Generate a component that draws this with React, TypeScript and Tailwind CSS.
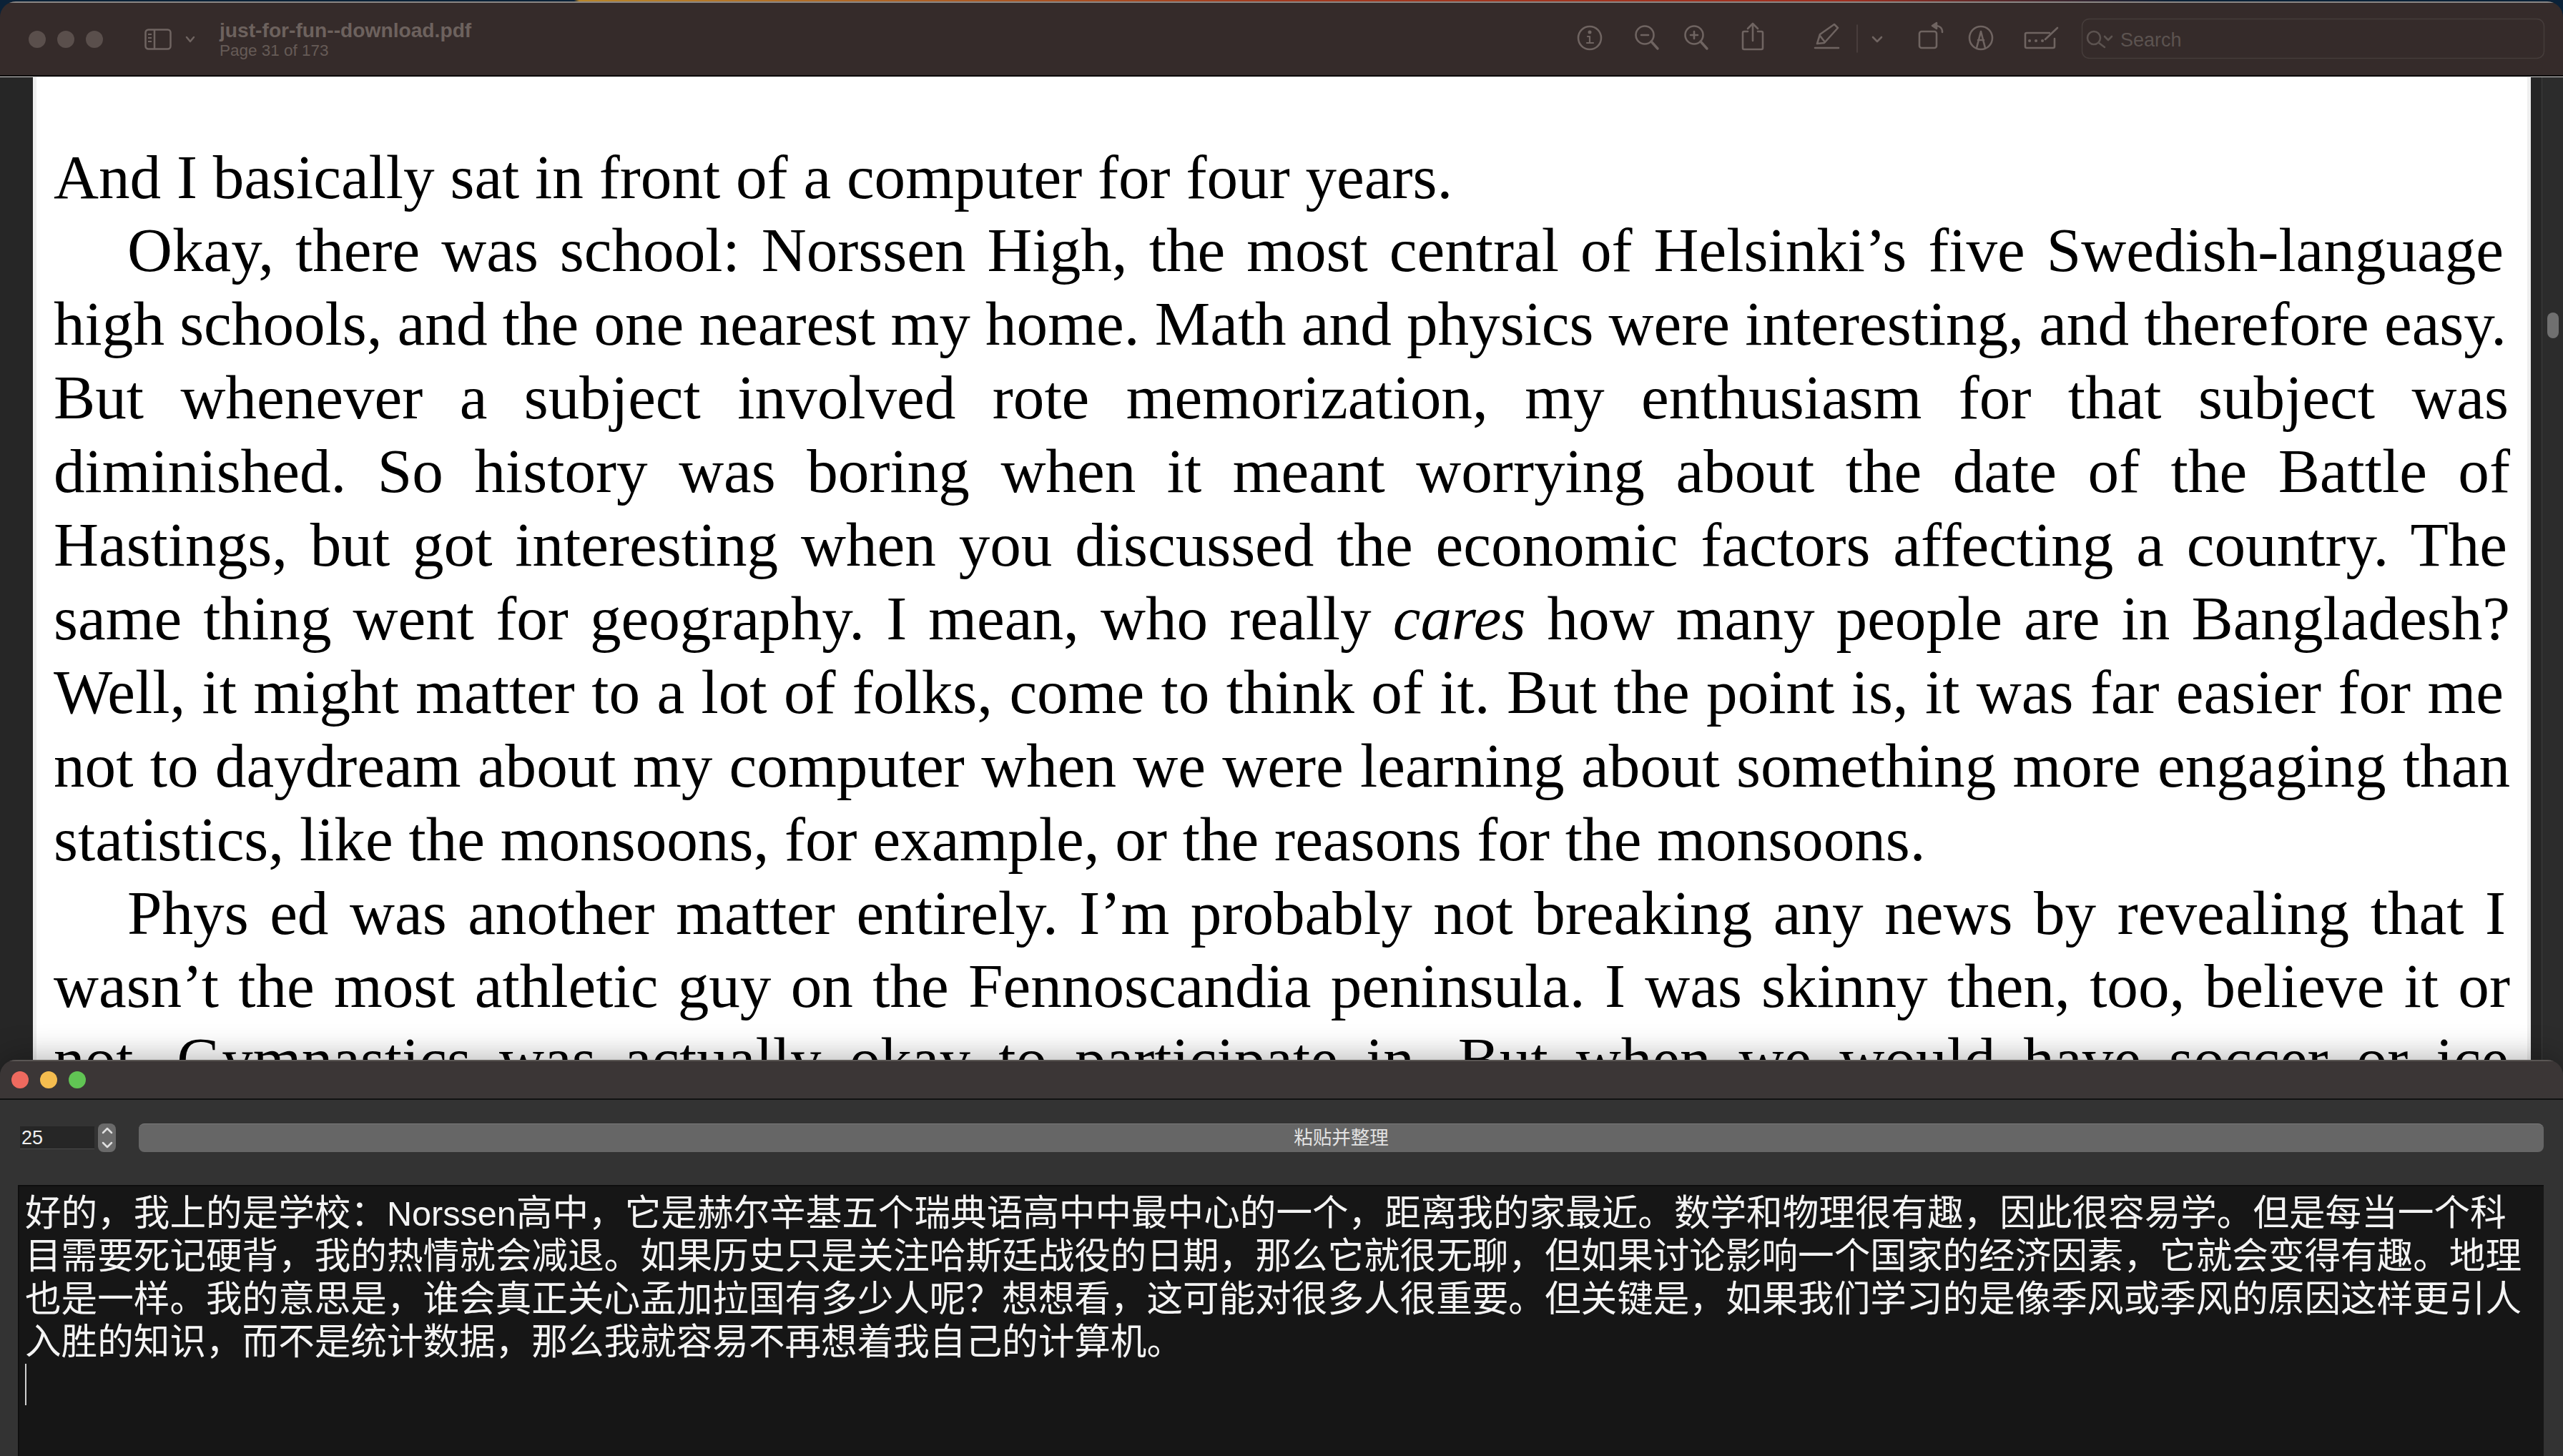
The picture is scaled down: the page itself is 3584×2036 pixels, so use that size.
const pdfParagraphs = [
  {
    indent: false,
    lines: [{ parts: ["And I basically sat in front of a computer for four years."], justify: false, inset: "" }],
  },
  {
    indent: true,
    lines: [
      { parts: ["Okay, there was school: Norssen High, the most central of Helsinki’s five Swedish-language"], justify: true, inset: "pr-[9px]" },
      { parts: ["high schools, and the one nearest my home. Math and physics were interesting, and therefore easy."], justify: true, inset: "pr-[5px] [word-spacing:-1px]" },
      { parts: ["But whenever a subject involved rote memorization, my enthusiasm for that subject was"], justify: true, inset: "pr-[2px]" },
      { parts: ["diminished. So history was boring when it meant worrying about the date of the Battle of"], justify: true, inset: "" },
      { parts: ["Hastings, but got interesting when you discussed the economic factors affecting a country. The"], justify: true, inset: "pr-[4px]" },
      { parts: ["same thing went for geography. I mean, who really ", "cares", " how many people are in Bangladesh?"], justify: true, inset: "" },
      { parts: ["Well, it might matter to a lot of folks, come to think of it. But the point is, it was far easier for me"], justify: true, inset: "pr-[9px]" },
      { parts: ["not to daydream about my computer when we were learning about something more engaging than"], justify: true, inset: "" },
      { parts: ["statistics, like the monsoons, for example, or the reasons for the monsoons."], justify: false, inset: "" },
    ],
  },
  {
    indent: true,
    lines: [
      { parts: ["Phys ed was another matter entirely. I’m probably not breaking any news by revealing that I"], justify: true, inset: "pr-[6px]" },
      { parts: ["wasn’t the most athletic guy on the Fennoscandia peninsula. I was skinny then, too, believe it or"], justify: true, inset: "" },
      { parts: ["not. Gymnastics was actually okay to participate in. But when we would have soccer or ice"], justify: true, inset: "pr-[2px]" },
    ],
  },
];

const translated = [
  "目需要死记硬背，我的热情就会减退。如果历史只是关注哈斯廷战役的日期，那么它就很无聊，但如果讨论影响一个国家的经济因素，它就会变得有趣。地理",
  "也是一样。我的意思是，谁会真正关心孟加拉国有多少人呢？想想看，这可能对很多人很重要。但关键是，如果我们学习的是像季风或季风的原因这样更引人",
  "入胜的知识，而不是统计数据，那么我就容易不再想着我自己的计算机。",
];

function Toolbar() {
  return (
    <svg width="1394" height="70" viewBox="2190 20 1394 70" className="shrink-0" fill="none" stroke="#6f6461" strokeWidth="2.6" strokeLinecap="round" strokeLinejoin="round">
      {/* info */}
      <circle cx="2223" cy="53" r="16" />
      <path d="M2220 51h3v8M2219 60h9" strokeWidth="2.2" />
      <circle cx="2223" cy="45" r="1.2" fill="#6f6461" />
      {/* zoom out */}
      <circle cx="2300" cy="49" r="12.5" />
      <path d="M2295 49h10" />
      <path d="M2309 58l9 10" strokeWidth="3.4" />
      {/* zoom in */}
      <circle cx="2369" cy="49" r="12.5" />
      <path d="M2364 49h10M2369 44v10" />
      <path d="M2378 58l9 10" strokeWidth="3.4" />
      {/* share */}
      <path d="M2444 44h-5a2 2 0 0 0-2 2v21a2 2 0 0 0 2 2h24a2 2 0 0 0 2-2v-21a2 2 0 0 0-2-2h-5M2451 57v-23M2444 40l7-7 7 7" />
      {/* highlight pen */}
      <path d="M2538 67h33M2541 61l4-13 20-14 5 5-19 21zM2545 50l7 9" />
      <path d="M2597 35v38" strokeOpacity="0.45" strokeWidth="1.5" />
      <path d="M2619 52l6 6 6-6" />
      {/* rotate */}
      <rect x="2684" y="44" width="24" height="23" rx="3" />
      <path d="M2716 45c0-6-4-9-9-9" />
      <path d="M2708 32l-6 4 6 4z" fill="#6f6461" />
      {/* markup */}
      <circle cx="2770" cy="53" r="16" />
      <path d="M2764 67l6-23 6 23M2766 56h8" />
      {/* sign */}
      <path d="M2866 46h-32a2 2 0 0 0-2 2v17a2 2 0 0 0 2 2h37a2 2 0 0 0 2-2v-11" />
      <path d="M2860 55l17-16" />
      <path d="M2838 57h.1M2847 57h.1M2856 57h.1" strokeWidth="4" />
      {/* search */}
      <rect x="2911.5" y="26.5" width="646" height="55" rx="10" stroke="#463d3b" strokeWidth="1.5" />
      <g stroke="#5c5350">
        <circle cx="2928" cy="53" r="9" />
        <path d="M2935 60l8 6M2943 51l5 5 5-5" />
      </g>
      <text x="2965" y="65" fill="#5c5350" stroke="none" fontSize="27" fontFamily="Liberation Sans, sans-serif">Search</text>
    </svg>
  );
}

function TitleBar() {
  return (
    <div className="flex h-[105px] shrink-0 items-center border-b-2 border-[#0c0a0a] bg-[#352b2a] pt-[3px] font-['Liberation_Sans',sans-serif] shadow-[inset_0_2px_0_#8a8684]">
      <div className="ml-[40px] flex gap-[16px]">
        <span className="h-[24px] w-[24px] rounded-full bg-[#5a4f4c]" />
        <span className="h-[24px] w-[24px] rounded-full bg-[#5a4f4c]" />
        <span className="h-[24px] w-[24px] rounded-full bg-[#5a4f4c]" />
      </div>
      <svg width="38" height="30" viewBox="0 0 38 30" className="ml-[58px]" fill="none" stroke="#6f6461" strokeWidth="2.5">
        <rect x="1.5" y="1.5" width="35" height="27" rx="4" />
        <path d="M14 2v26" />
        <path d="M5 8h5M5 13h5M5 18h5" strokeWidth="2" />
      </svg>
      <svg width="14" height="10" viewBox="0 0 14 10" className="ml-[19px]" fill="none" stroke="#6f6461" strokeWidth="2.5" strokeLinecap="round" strokeLinejoin="round">
        <path d="M2 2l5 6 5-6" />
      </svg>
      <div className="ml-[34px] flex w-[400px] flex-col">
        <div className="text-[28.2px] leading-[31px] font-bold text-[#6d625e]">just-for-fun--download.pdf</div>
        <div className="text-[22.5px] leading-[26px] text-[#665b57]">Page 31 of 173</div>
      </div>
      <div className="flex-1" />
      <Toolbar />
    </div>
  );
}

function PdfPage() {
  return (
    <div className="min-w-0 flex-1 border-x-[5px] border-[#efefef] bg-white px-[24px] pt-[88.5px] font-['Liberation_Serif',serif] text-[87.2px] leading-[102.9px] text-black">
      {pdfParagraphs.map((para, i) => (
        <div key={i}>
          {para.lines.map((line, j) => (
            <div
              key={j}
              className={`whitespace-nowrap ${line.inset} ${para.indent && j === 0 ? "pl-[103px]" : ""} ${line.justify ? "text-justify [text-align-last:justify]" : ""}`}
            >
              {line.parts.length === 3 ? (
                <>
                  {line.parts[0]}
                  <em>{line.parts[1]}</em>
                  {line.parts[2]}
                </>
              ) : (
                line.parts[0]
              )}
            </div>
          ))}
        </div>
      ))}
    </div>
  );
}

function PreviewWindow() {
  return (
    <div className="mt-[2px] flex h-[1500px] shrink-0 flex-col overflow-hidden rounded-t-[22px]">
      <TitleBar />
      <div className="flex min-h-0 flex-1 overflow-hidden border-t border-[#cfcfcf]">
        <div className="w-[46px] shrink-0 bg-[#262626]" />
        <PdfPage />
        <div className="flex w-[45px] shrink-0 bg-[#262626]">
          <div className="ml-[15px] flex-1 border-l border-[#3d3d3d] bg-[#2c2c2c] pt-[329px] pl-[7px]">
            <div className="h-[36px] w-[16px] rounded-full bg-[#707070]" />
          </div>
        </div>
      </div>
    </div>
  );
}

function ToolWindow() {
  return (
    <div className="relative -mt-[20px] flex flex-1 flex-col overflow-hidden rounded-t-[22px] bg-[#333333] font-['Liberation_Sans','Noto_Sans_CJK_SC',sans-serif] shadow-[0_-4px_44px_rgba(0,0,0,0.3)]">
      <div className="flex h-[56px] shrink-0 items-center gap-[16px] border-b-2 border-[#121212] bg-[#3b3636] pt-[2px] pl-[16px] shadow-[inset_0_2px_0_#5a5654]">
        <span className="h-[24px] w-[24px] rounded-full bg-[#ee6a5f]" />
        <span className="h-[24px] w-[24px] rounded-full bg-[#f5bd4f]" />
        <span className="h-[24px] w-[24px] rounded-full bg-[#61c454]" />
      </div>
      <div className="flex h-[119px] shrink-0 items-start pt-[33px] pr-[27px] pl-[28px]">
        <div className="mt-[4px] flex h-[32px] w-[104px] items-center border-b border-[#4a4a4a] bg-[#262626] pt-[2px] pl-[2px] text-[27px] leading-none text-[#eeeeee]">25</div>
        <div className="ml-[5px] flex h-[40px] w-[25px] flex-col items-center justify-around rounded-[8px] bg-[#6a6a6a]">
          <svg width="16" height="10" viewBox="0 0 16 10" fill="none" stroke="#e0e0e0" strokeWidth="2.5" strokeLinecap="round" strokeLinejoin="round">
            <path d="M2 8l6-6 6 6" />
          </svg>
          <svg width="16" height="10" viewBox="0 0 16 10" fill="none" stroke="#e0e0e0" strokeWidth="2.5" strokeLinecap="round" strokeLinejoin="round">
            <path d="M2 2l6 6 6-6" />
          </svg>
        </div>
        <div className="ml-[32px] flex h-[40px] flex-1 items-center justify-center rounded-[8px] border-t border-[#7a7a7a] bg-[#666666] text-[26.5px] text-[#e2e2e2]">粘贴并整理</div>
      </div>
      <div className="mr-[27px] ml-[25px] flex-1 border-t-2 border-l-2 border-[#0e0e0e] bg-[#161616] pt-[8px] pl-[8px] text-[50.6px] leading-[60px] whitespace-nowrap text-[#f4f4f4]">
        <div>
          好的，我上的是学校：<span className="text-[48.6px]">Norssen</span>高中，它是赫尔辛基五个瑞典语高中中最中心的一个，距离我的家最近。数学和物理很有趣，因此很容易学。但是每当一个科
        </div>
        {translated.map((line) => (
          <div key={line}>{line}</div>
        ))}
        <div className="h-[58px] w-[2px] bg-[#d0d0d0]" />
      </div>
    </div>
  );
}

export default function App() {
  return (
    <div className="flex h-[2036px] w-[3584px] flex-col overflow-hidden bg-[linear-gradient(to_right,#0b2238_22.4%,#b8862b_22.6%,#a33a1f_50%,#a03020_72%,#0b2238_85%)]">
      <PreviewWindow />
      <ToolWindow />
    </div>
  );
}
